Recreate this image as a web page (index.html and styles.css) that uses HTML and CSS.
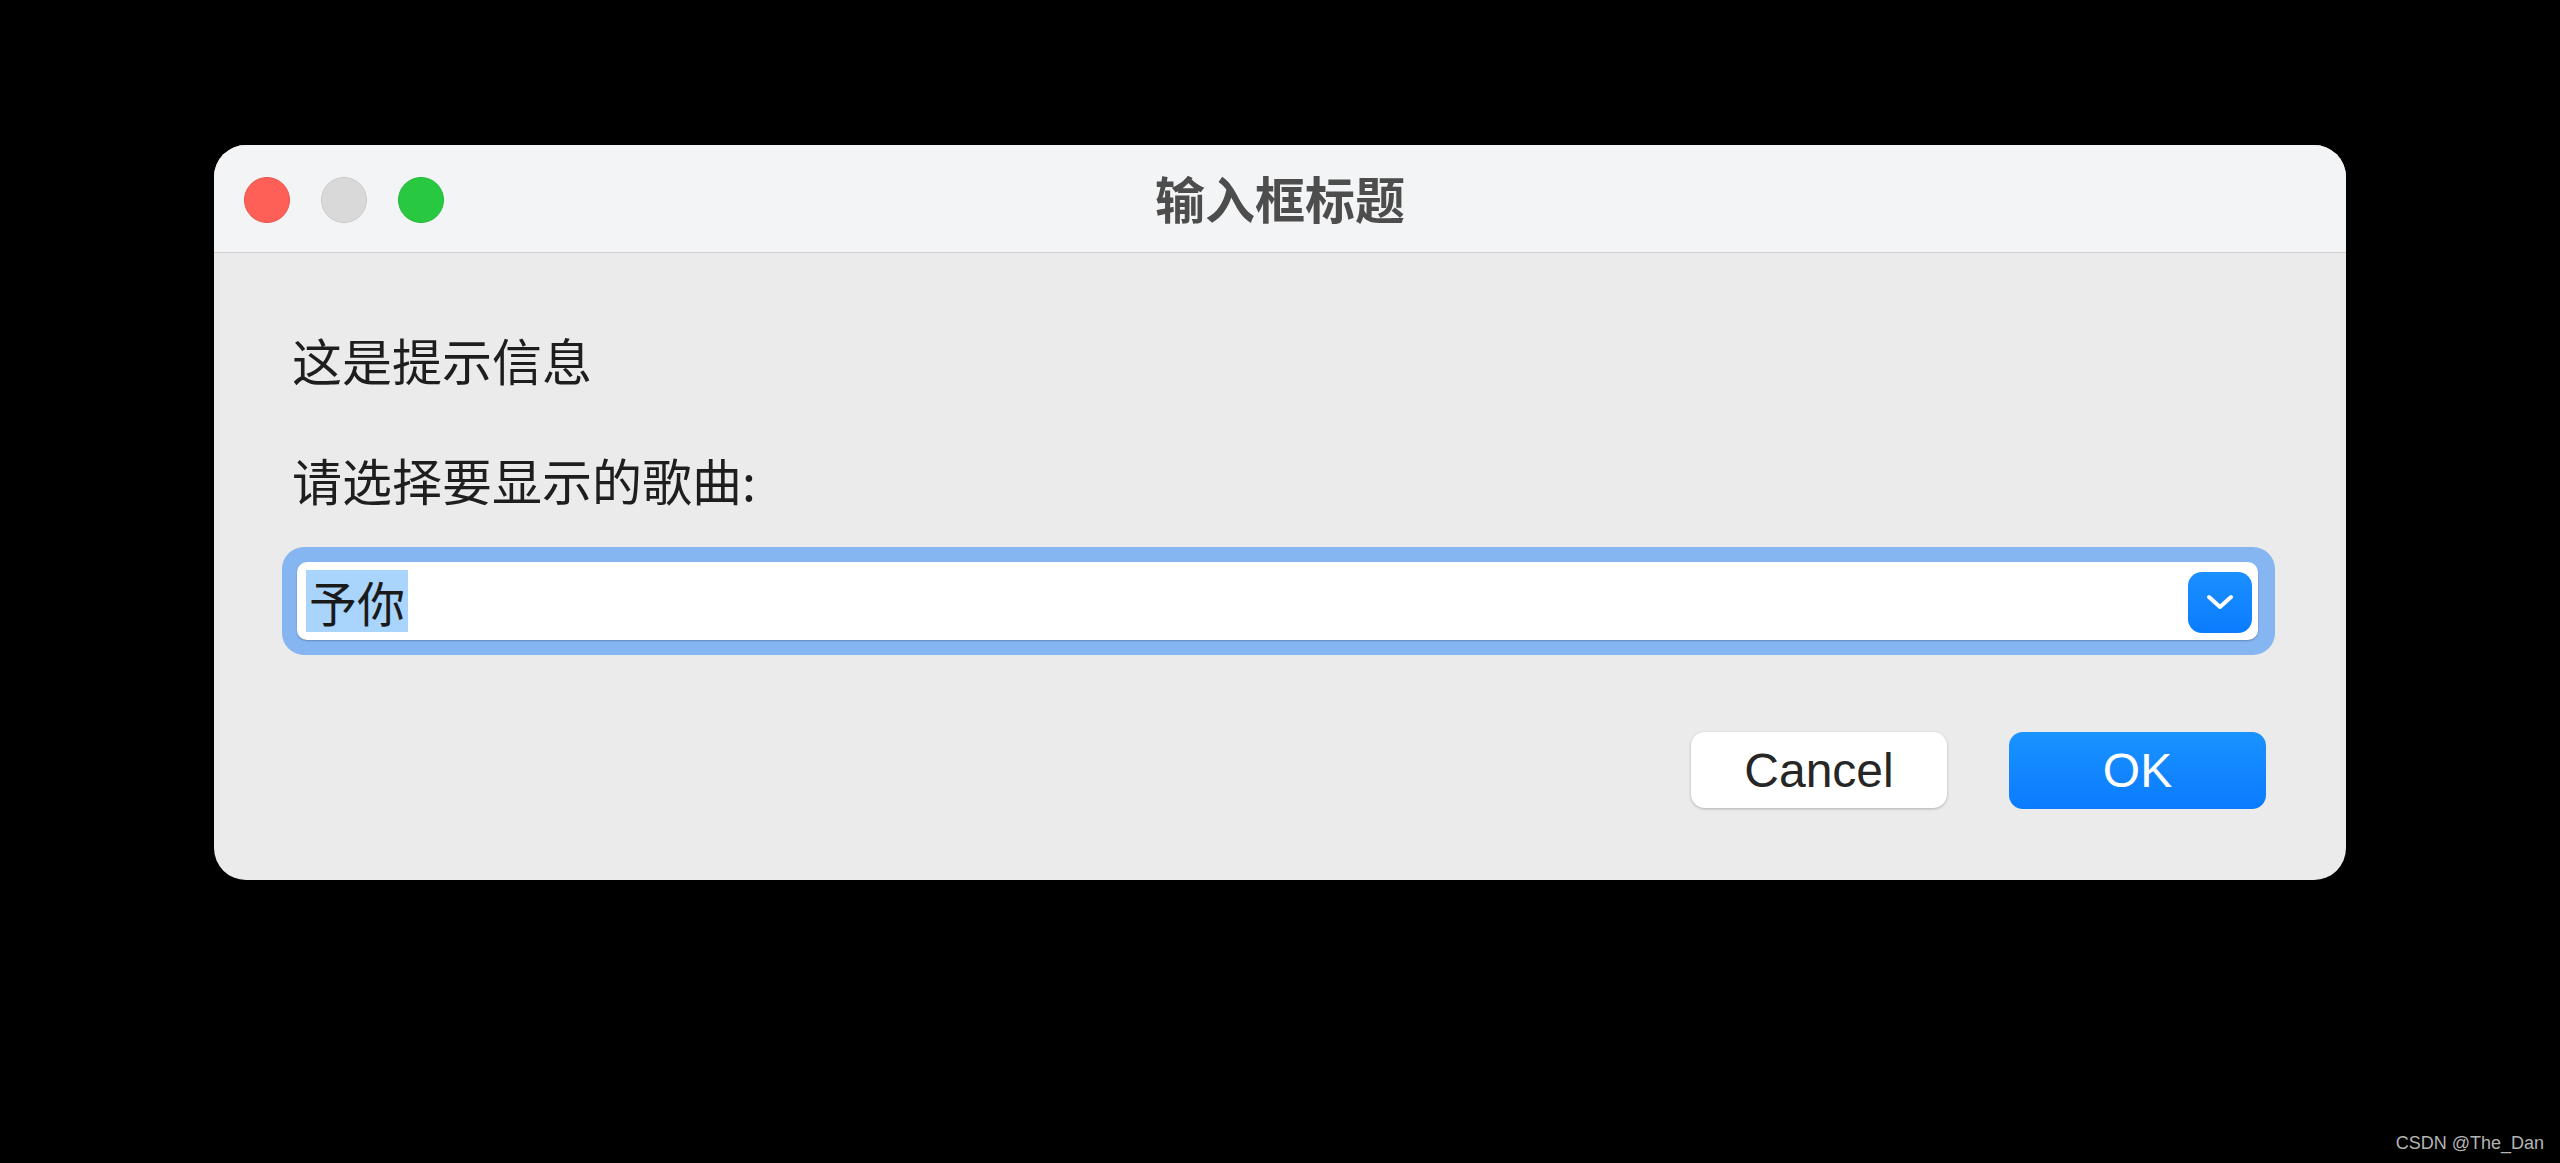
FILE: index.html
```html
<!DOCTYPE html>
<html lang="zh">
<head>
<meta charset="utf-8">
<title>输入框标题</title>
<link rel="stylesheet" href="styles.css">
</head>
<body>
<div class="stage">
  <div class="window">
    <div class="titlebar">
      <div class="lights">
        <span class="light red"></span>
        <span class="light gray"></span>
        <span class="light green"></span>
      </div>
      <div class="title">输入框标题</div>
      <div class="spacer"></div>
    </div>
    <div class="content">
      <div class="msg">这是提示信息</div>
      <div class="label">请选择要显示的歌曲:</div>
      <div class="combo">
        <div class="field">
          <span class="sel">予你</span>
          <span class="drop">
            <svg width="30" height="18" viewBox="0 0 30 18"><path d="M4 4 L15 14 L26 4" fill="none" stroke="#fff" stroke-width="4" stroke-linecap="round" stroke-linejoin="round"/></svg>
          </span>
        </div>
      </div>
      <div class="buttons">
        <div class="btn cancel">Cancel</div>
        <div class="btn ok">OK</div>
      </div>
    </div>
  </div>
  <div class="watermark">CSDN @The_Dan</div>
</div>
</body>
</html>
```
FILE: styles.css
```css
html, body {
  margin: 0;
  padding: 0;
  background: #000;
}
body {
  width: 2560px;
  height: 1163px;
  overflow: hidden;
  font-family: "Noto Sans CJK SC", "Noto Sans", sans-serif;
}
.stage {
  width: 2560px;
  height: 1163px;
  padding: 145px 0 0 214px;
  box-sizing: border-box;
  display: flex;
  flex-direction: column;
}
.window {
  width: 2132px;
  height: 735px;
  background: #ebebeb;
  border-radius: 32px;
  overflow: hidden;
  display: flex;
  flex-direction: column;
}
.titlebar {
  height: 107px;
  background: #f3f4f6;
  border-bottom: 1px solid #cfcfd1;
  display: grid;
  grid-template-columns: 1fr auto 1fr;
  align-items: center;
  flex-shrink: 0;
}
.lights {
  display: flex;
  gap: 31px;
  padding-left: 30px;
  padding-top: 2px;
}
.light {
  width: 46px;
  height: 46px;
  border-radius: 50%;
  box-sizing: border-box;
}
.red { background: #fe5f57; border: 1px solid #e9524b; }
.gray { background: #d9d9d9; border: 1px solid #cbcbcb; }
.green { background: #28c840; border: 1px solid #22b83a; }
.title {
  font-size: 50px;
  font-weight: bold;
  color: #4d4d4d;
  line-height: 50px;
  margin-top: -4px;
}
.content {
  padding: 81px 71px 0 68px;
  display: flex;
  flex-direction: column;
}
.msg, .label {
  font-size: 50px;
  line-height: 50px;
  color: #1e1e1e;
  padding-left: 10px;
}
.label {
  margin-top: 70px;
}
.combo {
  margin-top: 43px;
  height: 108px;
  box-sizing: border-box;
  padding: 15px 17px 15px 15px;
  background: #86b6f2;
  border-radius: 22px;
}
.field {
  height: 78px;
  background: #fff;
  border-radius: 10px;
  box-shadow: 0 1px 2px rgba(0,0,0,0.25);
  display: flex;
  align-items: center;
  justify-content: space-between;
  padding: 0 6px 0 9px;
}
.sel {
  background: #a9d4fc;
  color: #1a1a1a;
  font-size: 48px;
  line-height: 62px;
  height: 62px;
  padding: 0 3px;
  margin-top: -1px;
}
.drop {
  width: 64px;
  height: 61px;
  border-radius: 14px;
  background: linear-gradient(#1a90ff, #0a7cff);
  display: flex;
  align-items: center;
  justify-content: center;
  margin-top: 2px;
}
.buttons {
  margin-top: 77px;
  display: flex;
  justify-content: flex-end;
  gap: 62px;
  padding-right: 9px;
}
.btn {
  width: 256px;
  height: 76px;
  border-radius: 14px;
  display: flex;
  align-items: center;
  justify-content: center;
  font-family: "Liberation Sans", Arial, sans-serif;
  font-size: 48px;
}
.cancel {
  background: #fff;
  color: #262626;
  box-shadow: 0 1px 3px rgba(0,0,0,0.25);
}
.ok {
  width: 257px;
  height: 77px;
  background: linear-gradient(#1a93ff, #0a7bff);
  color: #fff;
}
.watermark {
  margin-top: auto;
  align-self: flex-end;
  margin-right: 16px;
  margin-bottom: 9px;
  font-family: "Liberation Sans", Arial, sans-serif;
  font-size: 18px;
  color: #b4b4b4;
}
```
